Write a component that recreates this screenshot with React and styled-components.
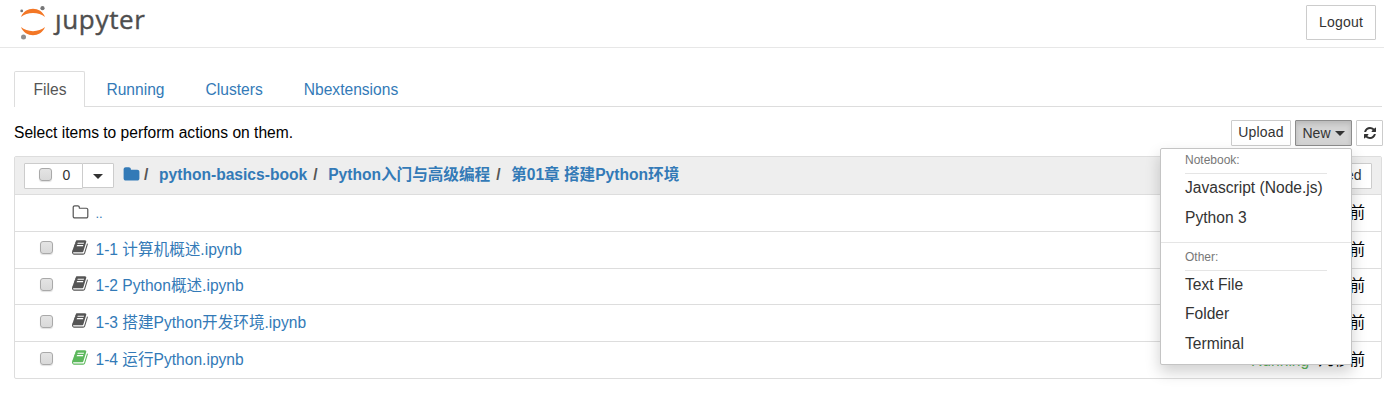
import React from "react";
import styled, { createGlobalStyle } from "styled-components";

const GlobalStyle = createGlobalStyle`
  *, *::before, *::after { box-sizing: border-box; }
  body {
    margin: 0;
    background: #fff;
    color: #000;
    font: 15.6px/20px "Liberation Sans", Arial, "Noto Sans CJK SC", sans-serif;
    overflow: hidden;
  }
`;

const LINK = "#337ab7";
const LINE = "#ddd";

const Page = styled.div`
  width: 1384px;
  height: 415px;
`;

const Header = styled.header`
  display: flex;
  justify-content: space-between;
  align-items: flex-start;
  height: 48px;
  padding: 5px 8px 0 20px;
  border-bottom: 1px solid #e7e7e7;
`;

const Logo = styled.svg`
  display: block;
  width: 128px;
  height: 42px;
  overflow: visible;
`;

const Button = styled.button`
  display: flex;
  align-items: center;
  justify-content: center;
  gap: ${(p) => p.$gap || 0}px;
  width: ${(p) => p.$w}px;
  height: ${(p) => p.$h || 26}px;
  padding: 0 0 ${(p) => p.$lift || 0}px;
  border: 1px solid ${(p) => (p.$active ? "#8c8c8c" : "#ccc")};
  border-radius: 1px;
  background: ${(p) => (p.$active ? "#d4d4d4" : "#fff")};
  box-shadow: ${(p) => (p.$active ? "inset 0 3px 5px rgba(0,0,0,.125)" : "none")};
  color: #333;
  font: 14px/18px "Liberation Sans", Arial, sans-serif;
  letter-spacing: ${(p) => p.$track || 0}px;
  white-space: nowrap;
`;

const Main = styled.main`
  padding: 23px 2px 0 14px;
`;

const Tabs = styled.nav`
  display: flex;
  gap: 2px;
  height: 36px;
  border-bottom: 1px solid ${LINE};
`;

const Tab = styled.a`
  height: ${(p) => (p.$active ? 36 : 35)}px;
  padding: 8px ${(p) => (p.$active ? 17.5 : 18.5)}px 0 18.5px;
  border: 1px solid ${(p) => (p.$active ? LINE : "transparent")};
  border-bottom: 0;
  border-radius: 2px 2px 0 0;
  background: #fff;
  color: ${(p) => (p.$active ? "#555" : LINK)};
`;

const Toolbar = styled.div`
  display: flex;
  justify-content: space-between;
  height: 49px;
  padding-top: 13px;
  margin-right: -1px;
`;

const Hint = styled.div`
  padding-top: 3px;
`;

const Actions = styled.div`
  display: flex;
  gap: 4px;
`;

const ButtonSlot = styled.div`
  position: relative;
`;

const Menu = styled.div`
  position: absolute;
  z-index: 10;
  top: 28px;
  right: 0;
  width: 192px;
  height: 217px;
  padding: 3px 0 0;
  border: 1px solid #c4c4c4;
  border-radius: 2px;
  background: #fff;
  box-shadow: 0 7px 15px rgba(0, 0, 0, 0.19);
`;

const MenuHeading = styled.div`
  height: 22px;
  margin: 0 24px;
  border-bottom: 1px solid #e5e5e5;
  color: #777;
  font-size: 12px;
  line-height: 16px;
`;

const MenuItem = styled.div`
  height: ${(p) => p.$h || 30}px;
  padding: 4px 24px 0;
  color: #333;
  white-space: nowrap;
`;

const MenuDivider = styled.div`
  height: 1px;
  margin: 8px 0 6px;
  background: #e5e5e5;
`;

const Listing = styled.section`
  border: 1px solid ${LINE};
  border-radius: 2px;
`;

const ListHeader = styled.div`
  display: flex;
  align-items: flex-start;
  height: 38px;
  padding: 6px 9px 0;
  border-bottom: 1px solid ${LINE};
  background: #eee;
`;

const Selector = styled.div`
  display: flex;
  align-items: center;
  width: 59px;
  height: 26px;
  padding: 0 0 2px 14px;
  border: 1px solid #ccc;
  border-radius: 1px;
  background: #fff;
  color: #333;
  font-size: 14px;
  gap: 10.500px;
`;

const SelectorToggle = styled(Button)`
  margin-left: -1px;
`;

const Check = styled.span`
  display: block;
  flex: none;
  width: 13px;
  height: 13px;
  margin-bottom: ${(p) => p.$raise || 0}px;
  border: 1px solid #a9a9a9;
  border-radius: 3px;
  background: linear-gradient(#e4e4e4, #d9d9d9);
  box-shadow: 0 1px 1px rgba(0, 0, 0, 0.12);
`;

const Crumbs = styled.div`
  display: flex;
  flex: 1;
  padding: 2px 0 0 9px;
  color: ${LINK};
  font-weight: bold;
  white-space: nowrap;
`;

const Slash = styled.span`
  width: ${(p) => p.$w}px;
  padding-left: ${(p) => p.$pad}px;
  color: #555;
`;

const Row = styled.div`
  display: flex;
  align-items: flex-start;
  height: ${(p) => p.$h}px;
  padding: ${(p) => p.$top || 8}px 16px 0 25px;
  border-bottom: ${(p) => (p.$last ? 0 : 1)}px solid ${LINE};
`;

const CheckCell = styled.div`
  width: 32px;
  padding-top: ${(p) => p.$top || 2}px;
`;

const IconCell = styled.div`
  width: 23.500px;
  margin-top: ${(p) => p.$top || 0}px;
`;

const Name = styled.a`
  flex: 1;
  padding-top: ${(p) => (p.$small ? 1 : 0)}px;
  color: ${LINK};
  font-size: ${(p) => (p.$small ? "13px" : "inherit")};
`;

const Status = styled.span`
  padding-top: 1px;
  margin-right: 9px;
  color: #5cb85c;
`;

const Glyph = styled.svg`
  display: block;
  width: ${(p) => p.$s}px;
  height: ${(p) => p.$s}px;
  fill: ${(p) => p.$c};
`;

const Caret = styled.span`
  margin-top: 1px;
  border: 5px solid transparent;
  border-top-color: #333;
  border-bottom: 0;
`;

const PATHS = {
  book: "M1639 478q40 57 18 129l-275 906q-19 64-76.500 107.500t-122.500 43.500h-923q-77 0-148.500-53.500t-99.500-131.500q-24-67-2-127 0-4 3-27t4-37q1-8-3-21.500t-3-19.500q2-11 8-21t16.500-23.500 16.500-23.500q23-38 45-91.500t30-91.500q3-10 .5-30t-.5-28q3-11 17-28t17-23q21-36 42-92t25-90q1-9-2.500-32t.5-28q4-13 22-30.500t22-22.500q19-26 42.500-84.500t27.500-96.500q1-8-3-25.500t-2-26.500q2-8 9-18t18-23 17-21q8-12 16.500-30.500t15-35 16-36 19.500-32 26.500-23.500 36-11.500 47.500 5.500l-1 3q38-9 51-9h761q74 0 114 56t18 130l-274 906q-36 119-71.500 153.500t-128.500 34.500h-869q-27 0-38 15-11 16-1 43 24 70 144 70h923q29 0 56-15.500t35-41.500l300-987q7-22 5-57 38 15 59 43zm-1064 2q-4 13 2 22.500t20 9.500h608q13 0 25.500-9.500t16.500-22.500l21-64q4-13-2-22.500t-20-9.500h-608q-13 0-25.500 9.500t-16.500 22.500zm-83 256q-4 13 2 22.500t20 9.500h608q13 0 25.500-9.500t16.500-22.500l21-64q4-13-2-22.500t-20-9.500h-608q-13 0-25.500 9.500t-16.500 22.500z",
  refresh: "M1639 1056q0 5-1 7-64 268-268 434.500t-478 166.500q-146 0-282.500-55t-243.500-157l-129 129q-19 19-45 19t-45-19-19-45v-448q0-26 19-45t45-19h448q26 0 45 19t19 45-19 45l-137 137q71 66 161 102t187 36q134 0 250-65t186-179q11-17 53-117 8-23 30-23h192q13 0 22.500 9.500t9.500 22.500zm25-800v448q0 26-19 45t-45 19h-448q-26 0-45-19t-19-45 19-45l138-138q-148-137-349-137-134 0-250 65t-186 179q-11 17-53 117-8 23-30 23h-199q-13 0-22.500-9.500t-9.500-22.500v-7q65-268 270-434.500t480-166.500q146 0 284 55.500t245 156.500l130-129q19-19 45-19t45 19 19 45z",
  folder: "M1728 608v704q0 92-66 158t-158 66h-1216q-92 0-158-66t-66-158v-960q0-92 66-158t158-66h320q92 0 158 66t66 158v32h672q92 0 158 66t66 158z",
  folderOutline: "M1600 1312v-704q0-40-28-68t-68-28h-704q-40 0-68-28t-28-68v-64q0-40-28-68t-68-28h-320q-40 0-68 28t-28 68v960q0 40 28 68t68 28h1216q40 0 68-28t28-68zm128-704v704q0 92-66 158t-158 66h-1216q-92 0-158-66t-66-158v-960q0-92 66-158t158-66h320q92 0 158 66t66 158v32h672q92 0 158 66t66 158z",
};

const Icon = ({ name, size = 17, color = "#555" }) => (
  <Glyph viewBox="0 0 1792 1792" $s={size} $c={color}>
    <path d={PATHS[name]} />
  </Glyph>
);

const CrumbIcon = styled.span`
  padding-top: 1px;
`;

const JupyterLogo = () => (
  <Logo viewBox="0 0 128 42">
    <path d="M1 12 C5 1 21 1 25 12 C19 6.500 7 6.500 1 12Z" fill="#f37726" />
    <path d="M1 22 C5 33 21 33 25 22 C19 27.500 7 27.500 1 22Z" fill="#f37726" />
    <circle cx="22.500" cy="3.200" r="2.100" fill="#767677" />
    <circle cx="1.700" cy="5.900" r="1.400" fill="#767677" />
    <circle cx="3.500" cy="32" r="2.500" fill="#8f8f90" />
    <text
      x="35"
      y="24"
      fill="#4e4e4e"
      stroke="#4e4e4e"
      strokeWidth="0.4"
      fontFamily="'Open Sans', 'Noto Sans', sans-serif"
      fontSize="26"
      textLength="90"
      lengthAdjust="spacing"
    >
      ȷupyter
    </text>
  </Logo>
);

const FILES = [
  { name: "1-1 计算机概述.ipynb", h: 37, checkTop: 1 },
  { name: "1-2 Python概述.ipynb", h: 36, top: 7 },
  { name: "1-3 搭建Python开发环境.ipynb", h: 37 },
  { name: "1-4 运行Python.ipynb", h: 36, running: true },
];

export default function App() {
  return (
    <Page>
      <GlobalStyle />
      <Header>
        <JupyterLogo />
        <Button $w={70} $h={35} $lift={1} $track={0.2}>Logout</Button>
      </Header>
      <Main>
        <Tabs>
          <Tab $active>Files</Tab>
          <Tab>Running</Tab>
          <Tab>Clusters</Tab>
          <Tab>Nbextensions</Tab>
        </Tabs>
        <Toolbar>
          <Hint>Select items to perform actions on them.</Hint>
          <Actions>
            <Button $w={60} $lift={2} $track={0.2}>Upload</Button>
            <ButtonSlot>
              <Button $w={57} $active $gap={4}>
                New <Caret />
              </Button>
              <Menu>
                <MenuHeading>Notebook:</MenuHeading>
                <MenuItem>Javascript (Node.js)</MenuItem>
                <MenuItem>Python 3</MenuItem>
                <MenuDivider />
                <MenuHeading>Other:</MenuHeading>
                <MenuItem $h={29}>Text File</MenuItem>
                <MenuItem>Folder</MenuItem>
                <MenuItem>Terminal</MenuItem>
              </Menu>
            </ButtonSlot>
            <Button $w={27}>
              <Icon name="refresh" size={14} color="#333" />
            </Button>
          </Actions>
        </Toolbar>
        <Listing>
          <ListHeader>
            <Selector>
              <Check $raise={2} />0
            </Selector>
            <SelectorToggle $w={32} $h={25}>
              <Caret />
            </SelectorToggle>
            <Crumbs>
              <CrumbIcon>
                <Icon name="folder" color={LINK} />
              </CrumbIcon>
              <Slash $w={19} $pad={4}>/</Slash>
              python-basics-book
              <Slash $w={21} $pad={6}>/</Slash>
              Python入门与高级编程
              <Slash $w={21} $pad={6}>/</Slash>
              第01章 搭建Python环境
            </Crumbs>
            <Button $w={104} $lift={2}>Last Modified</Button>
          </ListHeader>
          <Row $h={37}>
            <CheckCell />
            <IconCell $top={0.5}>
              <Icon name="folderOutline" />
            </IconCell>
            <Name $small>..</Name>
            几秒前
          </Row>
          {FILES.map((f, i) => (
            <Row key={f.name} $h={f.h} $top={f.top} $last={i === FILES.length - 1}>
              <CheckCell $top={f.checkTop}>
                <Check />
              </CheckCell>
              <IconCell $top={-0.7}>
                <Icon name="book" color={f.running ? "#5cb85c" : "#555"} />
              </IconCell>
              <Name>{f.name}</Name>
              {f.running && <Status>Running</Status>}
              几秒前
            </Row>
          ))}
        </Listing>
      </Main>
    </Page>
  );
}
